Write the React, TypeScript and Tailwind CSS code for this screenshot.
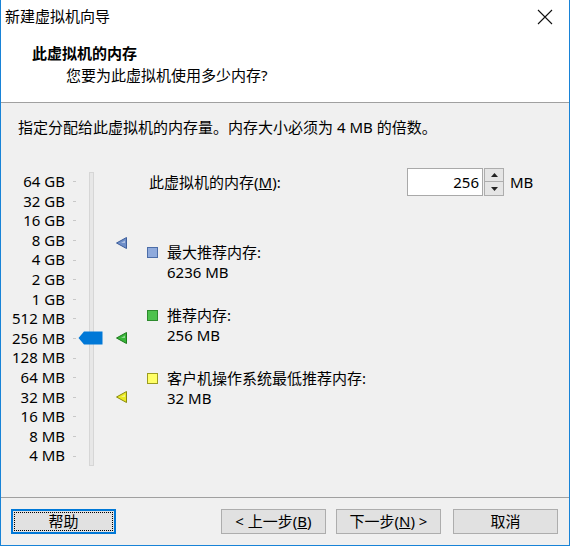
import React from 'react';

const FONT = { fontFamily: '"Noto Sans", "Noto Sans CJK SC", sans-serif' };

const SCALE = ['64 GB', '32 GB', '16 GB', '8 GB', '4 GB', '2 GB', '1 GB', '512 MB', '256 MB', '128 MB', '64 MB', '32 MB', '16 MB', '8 MB', '4 MB'];

const Marker = ({ fill, stroke }: { fill: string; stroke: string }) => (
  <svg width="11" height="12" viewBox="0 0 11 12">
    <polygon points="10.5,0.5 10.5,11.5 0.5,6" fill={fill} stroke={stroke} strokeWidth="1" />
    <polygon points="9,3.5 9,6 5,6" fill="#ffffff" opacity="0.45" />
  </svg>
);

const Swatch = ({ fill, stroke }: { fill: string; stroke: string }) => (
  <span className="inline-block w-[11px] h-[11px] border" style={{ background: fill, borderColor: stroke }} />
);

const Btn = ({ children, focused }: { children: React.ReactNode; focused?: boolean }) => (
  <button
    className={
      'w-[105px] h-[25px] bg-[#e1e1e1] text-[15px] leading-none text-black flex items-center justify-center ' +
      (focused ? 'border-2 border-[#0078d7] outline-1 outline-dotted outline-black -outline-offset-4' : 'border border-[#adadad]')
    }
  >
    {children}
  </button>
);

export default function App() {
  return (
    <div style={FONT} className="w-[570px] h-[546px] flex flex-col border-x border-b border-[#1883d7] bg-[#f0f0f0] text-[15px] text-black overflow-hidden">
      {/* title bar */}
      <div className="h-[33px] bg-white flex items-center justify-between pl-[4px] pr-[16px]">
        <span className="leading-none">新建虚拟机向导</span>
        <svg width="16" height="16" viewBox="0 0 16 16">
          <path d="M1 1 L15 15 M15 1 L1 15" stroke="#111" strokeWidth="1.1" />
        </svg>
      </div>

      {/* header */}
      <div className="h-[70px] bg-white border-b border-[#a0a0a0] pl-[31px] pt-[9px]">
        <div className="font-bold leading-[22px]">此虚拟机的内存</div>
        <div className="pl-[34px] leading-[22px]">您要为此虚拟机使用多少内存?</div>
      </div>

      {/* body */}
      <div className="flex-1 flex flex-col">
        <div className="pl-[17px] pt-[14px] leading-[20px]">指定分配给此虚拟机的内存量。内存大小必须为 4 MB 的倍数。</div>

        <div className="flex pt-[35px]">
          {/* slider widget */}
          <div className="relative w-[146px] flex">
            <div className="flex flex-col w-[64px] text-right">
              {SCALE.map((s) => (
                <div key={s} className="h-[19.6px] leading-[19.6px] whitespace-nowrap">{s}</div>
              ))}
            </div>
            <div className="flex flex-col w-[12px] pl-[8px]">
              {SCALE.map((s) => (
                <div key={s} className="h-[19.6px] flex items-center">
                  <span className="w-[3px] h-px bg-[#c8c8c8]" />
                </div>
              ))}
            </div>
            <div className="ml-[12px] w-[5px] h-[294px] bg-[#e7e7e7] border border-[#d6d6d6]" />
            {/* thumb */}
            <svg className="absolute left-[77px] top-[159px]" width="25" height="14" viewBox="0 0 25 14">
              <polygon points="0.5,7 6,0.5 24.5,0.5 24.5,13.5 6,13.5" fill="#0078d7" />
            </svg>
            <div className="absolute left-[115px] top-[65px]">
              <Marker fill="#6f8fc9" stroke="#3e5f9c" />
            </div>
            <div className="absolute left-[115px] top-[160px]">
              <Marker fill="#38b538" stroke="#1e7a1e" />
            </div>
            <div className="absolute left-[115px] top-[219px]">
              <Marker fill="#e9e922" stroke="#8a8a10" />
            </div>
          </div>

          {/* right column */}
          <div className="flex-1 flex flex-col">
            <div className="flex items-center h-[20px] pl-[2px]">
              <span className="w-[258px] whitespace-nowrap">
                此虚拟机的内存(<span className="underline">M</span>):
              </span>
              <div className="flex items-stretch h-[28px]">
                <div className="w-[76px] bg-white border border-[#a9a9a9] flex items-center justify-end pr-[3px]">256</div>
                <div className="flex flex-col w-[20px] ml-px">
                  <div className="h-[14px] bg-[#e5e5e5] border border-[#adadad] flex items-center justify-center">
                    <svg width="7" height="4" viewBox="0 0 7 4"><polygon points="0,4 7,4 3.5,0" fill="#222" /></svg>
                  </div>
                  <div className="h-[14px] bg-[#e5e5e5] border border-t-0 border-[#adadad] flex items-center justify-center">
                    <svg width="7" height="4" viewBox="0 0 7 4"><polygon points="0,0 7,0 3.5,4" fill="#222" /></svg>
                  </div>
                </div>
              </div>
              <span className="ml-[6px]">MB</span>
            </div>

            <div className="flex mt-[50px]">
              <div className="w-[20px] h-[20px] flex items-center"><Swatch fill="#8faadc" stroke="#4c6da8" /></div>
              <div className="leading-[20px]">
                <div>最大推荐内存:</div>
                <div>6236 MB</div>
              </div>
            </div>
            <div className="flex mt-[23px]">
              <div className="w-[20px] h-[20px] flex items-center"><Swatch fill="#4dc24d" stroke="#2d8a2d" /></div>
              <div className="leading-[20px]">
                <div>推荐内存:</div>
                <div>256 MB</div>
              </div>
            </div>
            <div className="flex mt-[23px]">
              <div className="w-[20px] h-[20px] flex items-center"><Swatch fill="#ffff66" stroke="#9c9c20" /></div>
              <div className="leading-[20px]">
                <div>客户机操作系统最低推荐内存:</div>
                <div>32 MB</div>
              </div>
            </div>
          </div>
        </div>

        <div className="flex-1" />
        <div className="border-t border-[#a0a0a0] h-[48px] flex items-center pl-[10px] pr-[11px]">
          <Btn focused>帮助</Btn>
          <div className="flex-1" />
          <div className="flex gap-[10px]">
            <Btn>&lt; 上一步(<span className="underline">B</span>)</Btn>
            <Btn>下一步(<span className="underline">N</span>) &gt;</Btn>
          </div>
          <div className="ml-[12px]">
            <Btn>取消</Btn>
          </div>
        </div>
      </div>
    </div>
  );
}
